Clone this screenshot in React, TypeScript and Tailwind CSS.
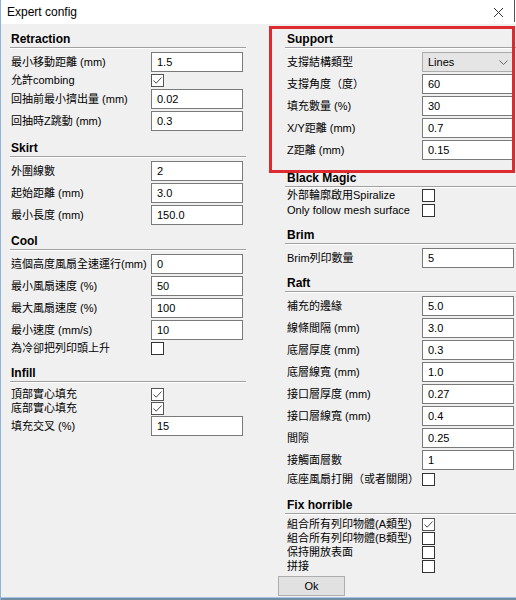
import React from 'react';

type Row =
    | { kind: 'input'; label: string; value: string }
    | { kind: 'check'; label: string; checked?: boolean; h?: string }
    | { kind: 'select'; label: string; value: string };

const Check: React.FC<{ checked?: boolean }> = ({ checked }) => (
    <div className={`w-[13px] h-[13px] bg-white border ${checked ? 'border-[#555]' : 'border-[#333]'} flex items-center justify-center`}>
        {checked && (
            <svg width="11" height="11" viewBox="0 0 11 11">
                <path d="M1.5 5.5 L4.2 8.2 L9.5 2.5" fill="none" stroke="#4a4a4a" strokeWidth="1" />
            </svg>
        )}
    </div>
);

const Section: React.FC<{
    title: string;
    rows: Row[];
    mt: string;
    pt?: string;
    labelW: string;
    labelPl: string;
}> = ({ title, rows, mt, pt = 'pt-[2px]', labelW, labelPl }) => (
    <div className={mt}>
        <div className={`h-[16px] leading-[16px] text-[12px] font-bold ${labelPl}`}>{title}</div>
        <div className="h-[2px] border-t border-[#a0a0a0] border-b border-b-white" />
        <div className={pt}>
            {rows.map((r, i) => (
                <div
                    key={i}
                    className={`flex items-center ${r.kind === 'check' ? r.h ?? 'h-[14px]' : 'h-[22px]'}`}
                >
                    <span className={`${labelW} ${labelPl} shrink-0 whitespace-nowrap`}>{r.label}</span>
                    {r.kind === 'input' && (
                        <div className="w-[92px] h-[20px] border border-[#7a7a7a] bg-white pl-[5px] leading-[18px]">
                            {r.value}
                        </div>
                    )}
                    {r.kind === 'check' && <Check checked={r.checked} />}
                    {r.kind === 'select' && (
                        <div className="w-[92px] h-[20px] border border-[#acacac] bg-[#e5e5e5] pl-[5px] leading-[18px] flex items-center justify-between pr-[5px]">
                            <span>{r.value}</span>
                            <svg width="9" height="5" viewBox="0 0 9 5">
                                <path d="M0.5 0.5 L4.5 4.5 L8.5 0.5" fill="none" stroke="#666" strokeWidth="1" />
                            </svg>
                        </div>
                    )}
                </div>
            ))}
        </div>
    </div>
);

const L = { labelW: 'w-[141px]', labelPl: 'pl-[1px]' };
const R = { labelW: 'w-[137px]', labelPl: 'pl-[2px]' };

const App: React.FC = () => {
    return (
        <div className="relative w-[516px] h-[600px] overflow-hidden bg-[#f0f0f0] border-l border-[#8fb3d9] flex flex-col text-[11px] text-black font-['Liberation_Sans','Noto_Sans_CJK_TC',sans-serif]">
            {/* Title bar */}
            <div className="h-[24px] shrink-0 bg-white flex items-center justify-between">
                <span className="pl-[6px] text-[12px]">Expert config</span>
                <div className="flex items-center h-full">
                    <svg width="11" height="11" viewBox="0 0 11 11" className="mr-[10px]">
                        <path d="M1 1 L10 10 M10 1 L1 10" stroke="#333" strokeWidth="1" />
                    </svg>
                    <div className="w-px h-[22px] self-start bg-[#555]" />
                    <div className="w-px" />
                </div>
            </div>

            {/* Body */}
            <div className="flex-1 flex flex-col">
                <div className="flex items-start">
                    {/* Left column */}
                    <div className="ml-[9px] w-[236px]">
                        <Section
                            title="Retraction"
                            mt="mt-[7px]"
                            {...L}
                            rows={[
                                { kind: 'input', label: '最小移動距離 (mm)', value: '1.5' },
                                { kind: 'check', label: '允許combing', checked: true, h: 'h-[15px]' },
                                { kind: 'input', label: '回抽前最小擠出量 (mm)', value: '0.02' },
                                { kind: 'input', label: '回抽時Z跳動 (mm)', value: '0.3' },
                            ]}
                        />
                        <Section
                            title="Skirt"
                            mt="mt-[8px]"
                            {...L}
                            rows={[
                                { kind: 'input', label: '外圍線數', value: '2' },
                                { kind: 'input', label: '起始距離 (mm)', value: '3.0' },
                                { kind: 'input', label: '最小長度 (mm)', value: '150.0' },
                            ]}
                        />
                        <Section
                            title="Cool"
                            mt="mt-[7px]"
                            {...L}
                            rows={[
                                { kind: 'input', label: '這個高度風扇全速運行(mm)', value: '0' },
                                { kind: 'input', label: '最小風扇速度 (%)', value: '50' },
                                { kind: 'input', label: '最大風扇速度 (%)', value: '100' },
                                { kind: 'input', label: '最小速度 (mm/s)', value: '10' },
                                { kind: 'check', label: '為冷卻把列印頭上升', h: 'h-[15px]' },
                            ]}
                        />
                        <Section
                            title="Infill"
                            mt="mt-[9px]"
                            pt="pt-[4px]"
                            {...L}
                            rows={[
                                { kind: 'check', label: '頂部實心填充', checked: true },
                                { kind: 'check', label: '底部實心填充', checked: true },
                                { kind: 'input', label: '填充交叉 (%)', value: '15' },
                            ]}
                        />
                    </div>

                    {/* Right column */}
                    <div className="ml-[39px] flex-1">
                        <Section
                            title="Support"
                            mt="mt-[7px]"
                            {...R}
                            rows={[
                                { kind: 'select', label: '支撐結構類型', value: 'Lines' },
                                { kind: 'input', label: '支撐角度（度）', value: '60' },
                                { kind: 'input', label: '填充數量 (%)', value: '30' },
                                { kind: 'input', label: 'X/Y距離 (mm)', value: '0.7' },
                                { kind: 'input', label: 'Z距離 (mm)', value: '0.15' },
                            ]}
                        />
                        <Section
                            title="Black Magic"
                            mt="mt-[9px]"
                            pt="pt-0"
                            {...R}
                            rows={[
                                { kind: 'check', label: '外部輪廓啟用Spiralize', h: 'h-[15px]' },
                                { kind: 'check', label: 'Only follow mesh surface', h: 'h-[15px]' },
                            ]}
                        />
                        <Section
                            title="Brim"
                            mt="mt-[9px]"
                            {...R}
                            rows={[{ kind: 'input', label: 'Brim列印數量', value: '5' }]}
                        />
                        <Section
                            title="Raft"
                            mt="mt-[6px]"
                            {...R}
                            rows={[
                                { kind: 'input', label: '補充的邊緣', value: '5.0' },
                                { kind: 'input', label: '線條間隔 (mm)', value: '3.0' },
                                { kind: 'input', label: '底層厚度 (mm)', value: '0.3' },
                                { kind: 'input', label: '底層線寬 (mm)', value: '1.0' },
                                { kind: 'input', label: '接口層厚度 (mm)', value: '0.27' },
                                { kind: 'input', label: '接口層線寬 (mm)', value: '0.4' },
                                { kind: 'input', label: '間隙', value: '0.25' },
                                { kind: 'input', label: '接觸面層數', value: '1' },
                                { kind: 'check', label: '底座風扇打開（或者關閉）', h: 'h-[17px]' },
                            ]}
                        />
                        <Section
                            title="Fix horrible"
                            mt="mt-[9px]"
                            {...R}
                            rows={[
                                { kind: 'check', label: '組合所有列印物體(A類型)', checked: true },
                                { kind: 'check', label: '組合所有列印物體(B類型)' },
                                { kind: 'check', label: '保持開放表面' },
                                { kind: 'check', label: '拼接' },
                            ]}
                        />
                    </div>
                </div>

                {/* Ok button */}
                <div className="mt-[3px] pl-[277px]">
                    <div className="w-[67px] h-[20px] bg-[#e1e1e1] border border-[#adadad] flex items-center justify-center">
                        Ok
                    </div>
                </div>
            </div>

            {/* Bottom window edge */}
            <div className="h-[3px] shrink-0 border-t border-[#a9c4dc] bg-[#6f8ea6]" />

            {/* Red highlight annotation */}
            <div className="absolute left-[268px] top-[26px] w-[246px] h-[147px] border-[3px] border-[#dc2a2e] pointer-events-none" />
        </div>
    );
};

export default App;
